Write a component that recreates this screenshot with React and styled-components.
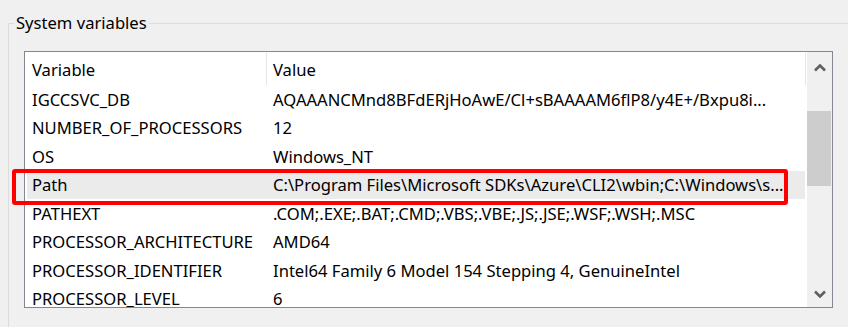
import React from 'react';
import styled, { createGlobalStyle } from 'styled-components';

const GlobalStyle = createGlobalStyle`
  body {
    margin: 0;
    background: #f0f0f0;
    font-family: 'Noto Sans', 'Liberation Sans', sans-serif;
    font-size: 16.6px;
    color: #000;
  }
`;

const Page = styled.div`
  position: relative;
  width: 848px;
  height: 327px;
  overflow: hidden;
  padding-left: 8px;
  box-sizing: border-box;
`;

const Group = styled.fieldset`
  margin: 11px -30px 0 0;
  padding: 0 0 40px 5px;
  border: 1px solid #dcdcdc;
  min-width: 0;
`;

const Legend = styled.legend`
  padding: 0 2px;
  line-height: 24px;
`;

const ListBox = styled.div`
  display: flex;
  width: 809px;
  height: 257px;
  margin: 16px 0 0 10px;
  border: 1px solid #828790;
  box-sizing: border-box;
  background: #fff;
  overflow: hidden;
`;

const Table = styled.div`
  flex: 1;
  min-width: 0;
  overflow: hidden;
`;

const HeaderRow = styled.div`
  display: flex;
  height: 33px;
  align-items: stretch;
`;

const HeaderCell = styled.div`
  width: ${(p) => p.$width}px;
  flex: none;
  display: flex;
  align-items: center;
  padding-left: ${(p) => p.$pad}px;
  box-sizing: border-box;
  border-right: 1px solid #e5e5e5;
  margin-top: 1px;
`;

const Row = styled.div`
  display: flex;
  height: 28.5px;
  align-items: center;
  margin-left: 2px;
  margin-right: 2px;
  background: ${(p) => (p.$selected ? '#ebebeb' : 'transparent')};
`;

const Cell = styled.div`
  width: ${(p) => p.$width}px;
  flex: none;
  padding-left: ${(p) => p.$pad}px;
  box-sizing: border-box;
  white-space: nowrap;
`;

const ScrollBar = styled.div`
  width: 25px;
  flex: none;
  display: flex;
  flex-direction: column;
  background: #f0f0f0;
`;

const ScrollButton = styled.div`
  height: ${(p) => p.$height}px;
  flex: none;
  display: flex;
  align-items: center;
  justify-content: center;
`;

const Track = styled.div`
  flex: 1;
`;

const Thumb = styled.div`
  margin-top: 27px;
  height: 75px;
  width: 24px;
  background: #cdcdcd;
`;

const Highlight = styled.div`
  position: absolute;
  left: 12px;
  top: 169px;
  width: 776px;
  height: 36px;
  border: 4px solid #ff0000;
  border-radius: 3px;
  box-sizing: border-box;
  pointer-events: none;
`;

const Chevron = ({ down }) => (
  <svg width="12" height="8" viewBox="0 0 12 8">
    <polyline
      points={down ? '1,1.5 6,6.5 11,1.5' : '1,6.5 6,1.5 11,6.5'}
      fill="none"
      stroke="#606060"
      strokeWidth="2.6"
    />
  </svg>
);

const rows = [
  ['IGCCSVC_DB', 'AQAAANCMnd8BFdERjHoAwE/Cl+sBAAAAM6flP8/y4E+/Bxpu8i...'],
  ['NUMBER_OF_PROCESSORS', '12'],
  ['OS', 'Windows_NT'],
  ['Path', 'C:\\Program Files\\Microsoft SDKs\\Azure\\CLI2\\wbin;C:\\Windows\\s...'],
  ['PATHEXT', '.COM;.EXE;.BAT;.CMD;.VBS;.VBE;.JS;.JSE;.WSF;.WSH;.MSC'],
  ['PROCESSOR_ARCHITECTURE', 'AMD64'],
  ['PROCESSOR_IDENTIFIER', 'Intel64 Family 6 Model 154 Stepping 4, GenuineIntel'],
  ['PROCESSOR_LEVEL', '6'],
];

export default function App() {
  return (
    <Page>
      <GlobalStyle />
      <Group>
        <Legend>System variables</Legend>
        <ListBox>
          <Table>
            <HeaderRow>
              <HeaderCell $width={242} $pad={7}>Variable</HeaderCell>
              <HeaderCell $width={539} $pad={6}>Value</HeaderCell>
            </HeaderRow>
            {rows.map(([name, value]) => (
              <Row key={name} $selected={name === 'Path'}>
                <Cell $width={240} $pad={5}>{name}</Cell>
                <Cell $width={538} $pad={6}>{value}</Cell>
              </Row>
            ))}
          </Table>
          <ScrollBar>
            <ScrollButton $height={32}>
              <Chevron />
            </ScrollButton>
            <Track>
              <Thumb />
            </Track>
            <ScrollButton $height={26}>
              <Chevron down />
            </ScrollButton>
          </ScrollBar>
        </ListBox>
      </Group>
      <Highlight />
    </Page>
  );
}
